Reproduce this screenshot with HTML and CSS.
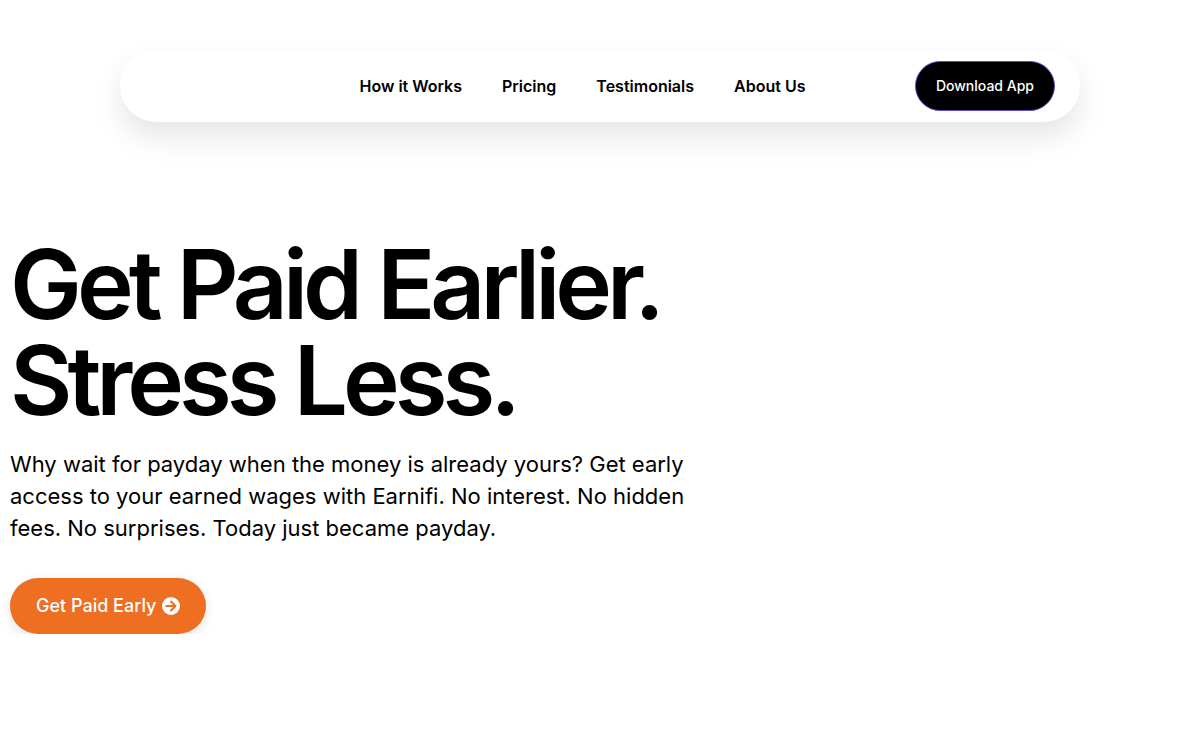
FILE: index.html
```html
<!DOCTYPE html>
<html lang="en">
  <head>
    <meta charset="UTF-8" />
    <meta name="viewport" content="width=device-width, initial-scale=1.0" />
    <title>Earnifi</title>
    <link rel="stylesheet" href="styles.css">
  </head>
  <body>
    <!-- Navbar -->
    <header class="navbar">
      <div class="logo"></div>
      <nav class="nav-links">
        <a href="#">How it Works</a>
        <a href="#">Pricing</a>
        <a href="#">Testimonials</a>
        <a href="#">About Us</a>
      </nav>
      <button class="download-btn">Download App</button>
    </header>

    <!-- Hero Section -->
    <main class="hero">
      <h1>Get Paid Earlier.<br />Stress Less.</h1>
      <p>
        Why wait for payday when the money is already yours? Get early access to
        your earned wages with Earnifi. No interest. No hidden fees. No
        surprises. Today just became payday.
      </p>
      <button class="cta-btn">
        Get Paid Early
        <svg class="cta-icon" viewBox="0 0 512 512" aria-hidden="true">
          <circle cx="256" cy="256" r="256" />
          <path d="M120 256h260M256 128l128 128-128 128" />
        </svg>
      </button>
    </main>
  </body>
</html>
```

FILE: styles.css
```css
body {
  font-family: Inter, sans-serif;
  margin: 0;
  padding: 0;
  color: #000;
  background-color: #fff;
  text-rendering: optimizeSpeed;
}

/* Navbar styling */
.navbar {
  display: flex;
  justify-content: space-between;
  align-items: center;
  box-sizing: border-box;
  width: 80%;
  margin: 50px auto 0;
  padding: 11px 25px;
  border-radius: 40px;
  background-color: #fff;
  box-shadow: 0 15px 30px rgba(0, 0, 0, 0.1);
}

.logo {
  width: 105px;
}

.nav-links {
  display: flex;
  gap: 40px;
}

.nav-links a {
  color: #000;
  font-size: 16px;
  font-weight: 600;
  text-decoration: none;
}

.download-btn {
  height: 50px;
  padding: 0 20px;
  border: 1px solid #5a4fcf;
  border-radius: 25px;
  background-color: #000;
  color: #fff;
  font-family: inherit;
  font-size: 14px;
  font-weight: 500;
  line-height: 20px;
  cursor: pointer;
}

/* Hero section */
.hero {
  max-width: 700px;
  margin-top: 114px;
  padding: 0 10px;
}

.hero h1 {
  margin: 0;
  font-size: 96px;
  font-weight: 600;
  line-height: 96px;
  letter-spacing: -5px;
}

.hero p {
  margin: 20px 0 34px;
  font-size: 22px;
  line-height: 32px;
}

.cta-btn {
  display: flex;
  align-items: center;
  gap: 6px;
  height: 56px;
  padding: 0 26px;
  border: none;
  border-radius: 28px;
  background-color: #ee6e22;
  color: #fff;
  font-family: inherit;
  font-size: 18px;
  font-weight: 500;
  line-height: 20px;
  box-shadow: 0 4px 12px rgba(0, 0, 0, 0.1);
  cursor: pointer;
}

.cta-icon {
  width: 18px;
  height: 18px;
}

.cta-icon circle {
  fill: #fff;
}

.cta-icon path {
  fill: none;
  stroke: #ee6e22;
  stroke-width: 60;
  stroke-linecap: round;
  stroke-linejoin: round;
}
```
